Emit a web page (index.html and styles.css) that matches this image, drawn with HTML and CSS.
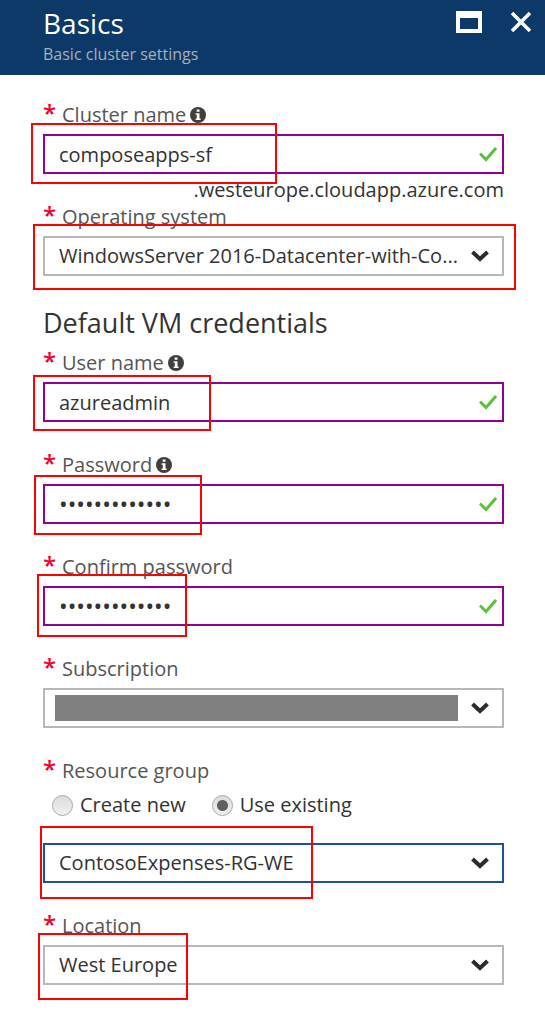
FILE: index.html
```html
<!DOCTYPE html>
<html lang="en">
<head>
<meta charset="utf-8">
<meta name="viewport" content="width=device-width, initial-scale=1">
<title>Basics</title>
<link rel="stylesheet" href="styles.css">
</head>
<body>
<svg class="defs" aria-hidden="true">
  <symbol id="check" viewBox="0 0 18 16"><path d="M1 7.5 7 13.5 17 2" fill="none" stroke="#5fc13b" stroke-width="3"/></symbol>
  <symbol id="chevron" viewBox="0 0 18 12"><path d="M1.5 2 9 9 16.500 2" fill="none" stroke="#2b2b2b" stroke-width="4"/></symbol>
  <symbol id="info" viewBox="0 0 16 16"><circle cx="8" cy="8" r="8" fill="#3f3f3f"/><path d="M6.700 2.600h2.800v2.200H6.700zM5.600 6.300h3.900v5.100h1.100v1.500H5.600v-1.500h1.200V7.800H5.600z" fill="#fff"/></symbol>
</svg>
<header class="header">
  <div>
    <h1 class="title">Basics</h1>
    <p class="subtitle">Basic cluster settings</p>
  </div>
  <div class="actions">
    <button class="icon-button" type="button" aria-label="Maximize"><svg width="26" height="22" viewBox="0 0 26 22"><path fill="#fff" fill-rule="evenodd" d="M0 0h26v22H0zM4 7v11h18V7z"/></svg></button>
    <button class="icon-button" type="button" aria-label="Close"><svg width="22" height="22" viewBox="0 0 22 22"><path d="M2 2 20 20M20 2 2 20" stroke="#fff" stroke-width="3.500"/></svg></button>
  </div>
</header>
<form class="form">
  <div class="field field-suffixed">
    <label class="label" for="cluster"><span class="star">*</span>Cluster name<svg class="info"><use href="#info"/></svg></label>
    <div class="control">
      <input class="box valid" id="cluster" type="text" value="composeapps-sf">
      <svg class="check"><use href="#check"/></svg>
      <span class="mark mark-cluster"></span>
    </div>
    <p class="suffix">.westeurope.cloudapp.azure.com</p>
  </div>
  <div class="field">
    <label class="label" for="os"><span class="star">*</span>Operating system</label>
    <div class="control">
      <select class="box" id="os"><option>WindowsServer 2016-Datacenter-with-Co...</option></select>
      <svg class="chevron"><use href="#chevron"/></svg>
      <span class="mark mark-os"></span>
    </div>
  </div>
  <h2 class="heading">Default VM credentials</h2>
  <div class="field">
    <label class="label" for="user"><span class="star">*</span>User name<svg class="info"><use href="#info"/></svg></label>
    <div class="control">
      <input class="box valid" id="user" type="text" value="azureadmin">
      <svg class="check"><use href="#check"/></svg>
      <span class="mark mark-user"></span>
    </div>
  </div>
  <div class="field">
    <label class="label" for="password"><span class="star">*</span>Password<svg class="info"><use href="#info"/></svg></label>
    <div class="control">
      <input class="box valid password" id="password" type="password" value="aaaaaaaaaaaaa">
      <svg class="check"><use href="#check"/></svg>
      <span class="mark mark-password"></span>
    </div>
  </div>
  <div class="field">
    <label class="label" for="confirm"><span class="star">*</span>Confirm password</label>
    <div class="control">
      <input class="box valid password" id="confirm" type="password" value="aaaaaaaaaaaaa">
      <svg class="check"><use href="#check"/></svg>
      <span class="mark mark-confirm"></span>
    </div>
  </div>
  <div class="field">
    <label class="label" for="subscription"><span class="star">*</span>Subscription</label>
    <div class="control">
      <select class="box" id="subscription"><option></option></select>
      <span class="redacted"></span>
      <svg class="chevron"><use href="#chevron"/></svg>
    </div>
  </div>
  <div class="field">
    <label class="label" for="group"><span class="star">*</span>Resource group</label>
    <div class="radios">
      <label class="radio"><input type="radio" name="mode">Create new</label>
      <label class="radio"><input type="radio" name="mode" checked>Use existing</label>
    </div>
    <div class="control">
      <select class="box focused" id="group"><option>ContosoExpenses-RG-WE</option></select>
      <svg class="chevron"><use href="#chevron"/></svg>
      <span class="mark mark-group"></span>
    </div>
  </div>
  <div class="field">
    <label class="label" for="location"><span class="star">*</span>Location</label>
    <div class="control">
      <select class="box" id="location"><option>West Europe</option></select>
      <svg class="chevron"><use href="#chevron"/></svg>
      <span class="mark mark-location"></span>
    </div>
  </div>
</form>
</body>
</html>
```
FILE: styles.css
```css
* { box-sizing: border-box; }
body {
  margin: 0;
  background: #fff;
  color: #333;
  font: 400 20px/28px "Open Sans", "Noto Sans", sans-serif;
}
h1, h2, p { margin: 0; font-weight: 400; }
.defs { display: none; }

.header {
  display: flex;
  justify-content: space-between;
  padding: 4px 13px 9px 43px;
  background: #0c3968;
  color: #fff;
}
.title { font-size: 28px; line-height: 38px; }
.subtitle { font-size: 16px; line-height: 24px; color: #a9afb6; }
.actions { display: flex; align-items: flex-start; gap: 28px; padding-top: 7px; }
.icon-button { display: flex; padding: 0; border: 0; background: none; }

.form { padding: 26px 41px 36px 43px; }
.field { margin-bottom: 29px; }
.field-suffixed { margin-bottom: 0; }
.field:last-child { margin-bottom: 0; }
.label {
  display: flex;
  align-items: center;
  margin-bottom: 5px;
  color: #555;
}
.star {
  width: 19px;
  padding-bottom: 4px;
  color: #f0002d;
  font-size: 24px;
  font-weight: 600;
  line-height: 24px;
}
.info { width: 16px; height: 16px; margin-left: 4px; }

.control { display: grid; align-items: center; position: relative; }
.control > .box, .control > svg, .redacted { grid-area: 1 / 1; }
.box {
  width: 100%;
  height: 40px;
  padding: 0 40px 0 14px;
  border: 2px solid #b8b8b8;
  border-radius: 0;
  outline: 0;
  appearance: none;
  background: #fff;
  color: #333;
  font: inherit;
}
.password { font-size: 23px; }
.valid { border-color: #92009c; }
.focused { border-color: #1f4ea3; }
.check { width: 18px; height: 16px; margin-right: 7px; justify-self: end; }
.chevron { width: 18px; height: 12px; margin-right: 15px; justify-self: end; }
.redacted { height: 26px; margin: 0 46px 0 12px; background: #808080; }
.suffix { padding-top: 3px; line-height: 26px; text-align: right; }

.heading { margin-bottom: 8px; font-size: 27px; line-height: 36px; }

.radios { display: flex; gap: 26px; margin-bottom: 23px; padding-left: 9px; line-height: 30px; }
.radio { display: flex; align-items: center; gap: 7px; }
.radio input {
  width: 21px;
  height: 21px;
  margin: 0;
  appearance: none;
  border: 1px solid #a8a8a8;
  border-radius: 50%;
  background: linear-gradient(#dcdcdc, #f0f0f0);
}
.radio input:checked {
  background: radial-gradient(circle, #606060 5px, transparent 6px), linear-gradient(#dcdcdc, #f0f0f0);
}

.mark { position: absolute; border: 2px solid #f00; pointer-events: none; }
.mark-cluster { left: -12px; top: -11px; width: 246px; height: 61px; }
.mark-os { left: -10px; right: -12px; top: -12px; height: 66px; }
.mark-user { left: -10px; top: -7px; width: 178px; height: 56px; }
.mark-password { left: -9px; top: -9px; width: 168px; height: 60px; }
.mark-confirm { left: -6px; top: -12px; width: 150px; height: 63px; }
.mark-group { left: -3px; top: -17px; width: 273px; height: 73px; }
.mark-location { left: -5px; top: -12px; width: 150px; height: 67px; }
```
